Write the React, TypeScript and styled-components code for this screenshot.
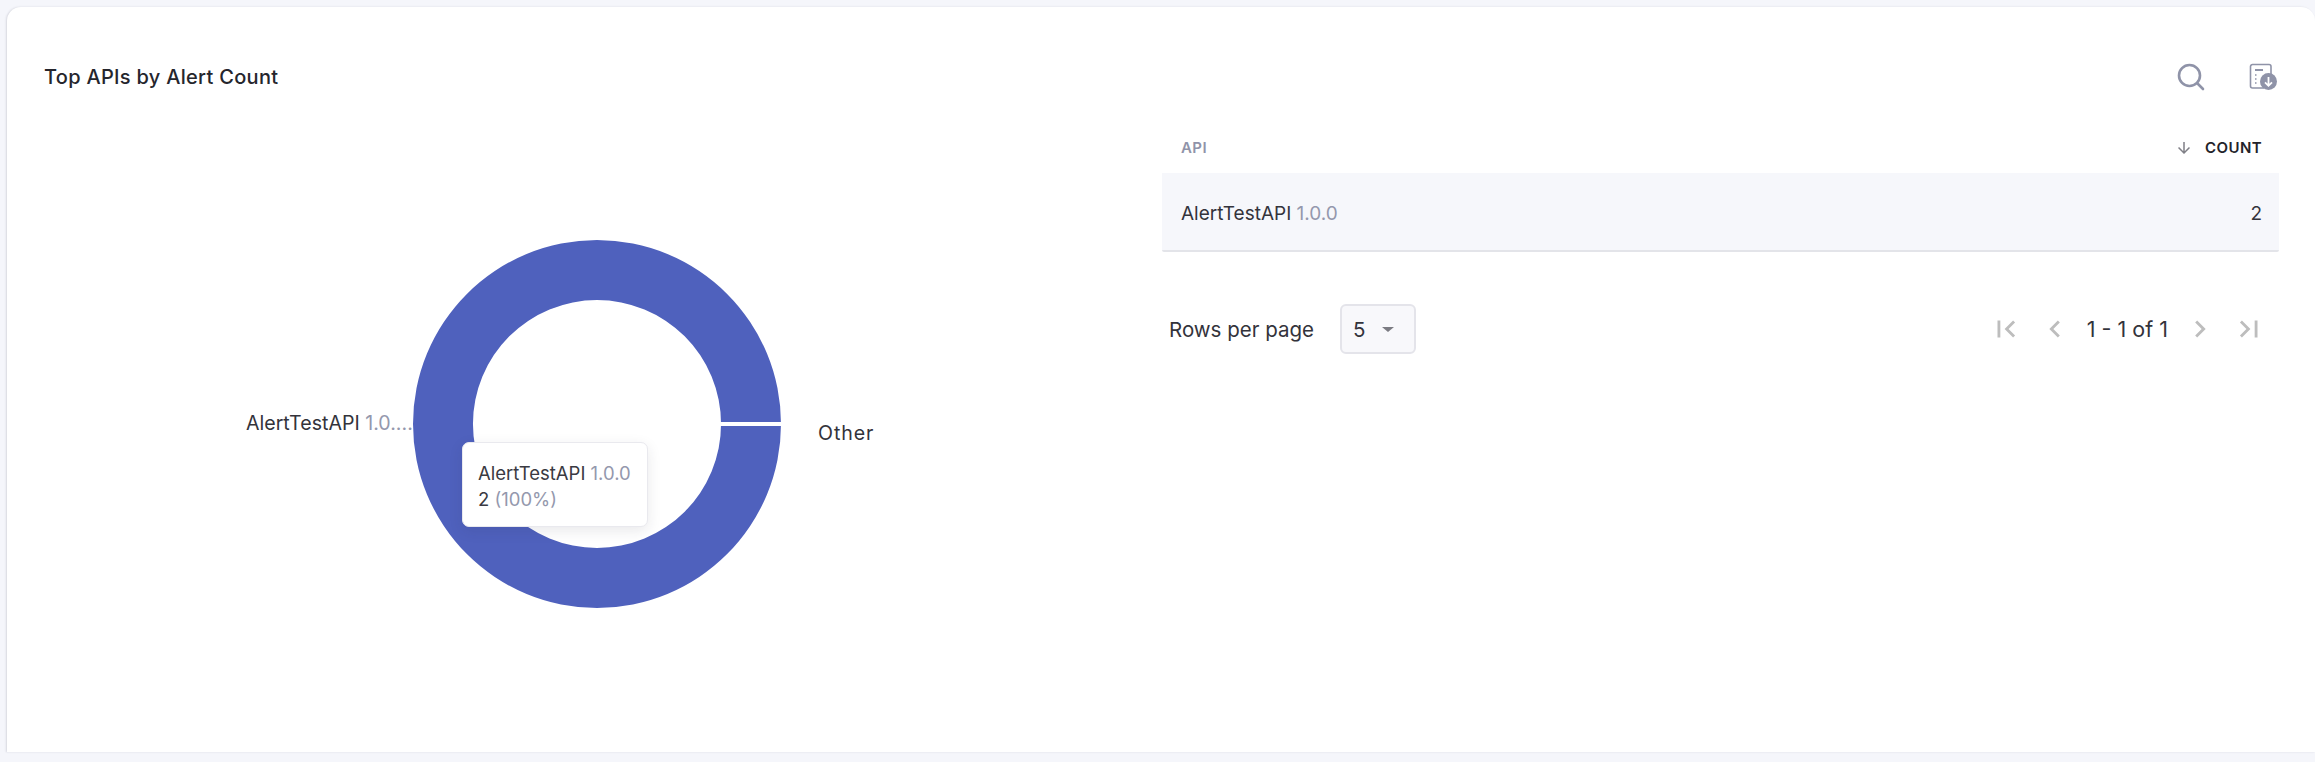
import React from "react";
import styled, { createGlobalStyle } from "styled-components";

const Global = createGlobalStyle`
  html, body { margin: 0; padding: 0; background: #f5f6fb; }
  body { font-family: "Inter", "Liberation Sans", sans-serif; color: #26262e; }
`;
const Page = styled.div`
  box-sizing: border-box;
  width: 2315px;
  height: 762px;
  padding: 7px 0 10px 7px;
  overflow: hidden;
`;
const Card = styled.section`
  height: 100%;
  display: flex;
  flex-direction: column;
  background: #fff;
  border-radius: 14px 14px 0 0;
  box-shadow: -1px 0 2px rgba(60, 60, 80, 0.16);
`;
const Header = styled.header`
  height: 113px;
  flex: none;
  box-sizing: border-box;
  display: flex;
  align-items: center;
  justify-content: space-between;
  padding: 27px 38px 0 37px;
`;
const Title = styled.h2`
  margin: 0;
  font-size: 20px;
  font-weight: 500;
  letter-spacing: 0.3px;
  color: #25252c;
`;
const Tools = styled.div`
  display: flex;
  align-items: center;
  gap: 43px;
`;
const Body = styled.div`
  flex: 1;
  display: grid;
  grid-template-columns: 1155px 1fr;
  min-height: 0;
`;
const ChartPane = styled.div`
  position: relative;
`;
const ChartSvg = styled.svg`
  display: block;
`;
const ChartLabel = styled.text`
  font-family: "Inter", "Liberation Sans", sans-serif;
  font-size: 19.6px;
  fill: #33333b;
`;
const Muted = styled.tspan`
  fill: #9498ad;
`;
const Tooltip = styled.div`
  position: absolute;
  left: 455px;
  top: 322px;
  box-sizing: border-box;
  width: 186px;
  height: 85px;
  padding: 17px 15px;
  background: #fff;
  border: 1px solid #e9e9ee;
  border-radius: 7px;
  box-shadow: 0 4px 14px rgba(40, 40, 60, 0.1);
  font-size: 18.5px;
  line-height: 26px;
  color: #3a3a42;
  white-space: nowrap;
`;
const Soft = styled.span`
  color: #9498ad;
`;
const TablePane = styled.div`
  padding-right: 36px;
`;
const HeadRow = styled.div`
  height: 53px;
  display: flex;
  align-items: center;
  justify-content: space-between;
  padding: 2px 17px 0 19px;
  box-sizing: border-box;
  font-size: 15px;
  font-weight: 600;
  letter-spacing: 0.4px;
`;
const HeadLabel = styled.span<{ $active?: boolean }>`
  color: ${(p) => (p.$active ? "#23232a" : "#8f93a9")};
`;
const SortCell = styled.div`
  display: flex;
  align-items: center;
  gap: 12px;
`;
const DataRow = styled.div`
  height: 79px;
  box-sizing: border-box;
  display: flex;
  align-items: center;
  justify-content: space-between;
  padding: 4px 17px 0 19px;
  background: #f6f7fb;
  border-bottom: 2px solid #e3e4e9;
  border-radius: 0 0 2px 2px;
  font-size: 19px;
  color: #33333b;
`;
const Pager = styled.div`
  margin-top: 52px;
  display: flex;
  align-items: center;
  justify-content: space-between;
  padding: 0 13px 0 7px;
  height: 50px;
`;
const PagerLeft = styled.div`
  display: flex;
  align-items: center;
  gap: 26px;
  font-size: 20.5px;
  color: #33333b;
`;
const SelectBox = styled.div`
  box-sizing: border-box;
  width: 76px;
  height: 50px;
  display: flex;
  align-items: center;
  gap: 17px;
  padding-left: 11px;
  background: #f8f8fb;
  border: 2px solid #e4e4ea;
  border-radius: 6px;
`;
const Caret = styled.span`
  width: 0;
  height: 0;
  border-left: 6px solid transparent;
  border-right: 6px solid transparent;
  border-top: 5px solid #7b7b82;
`;
const PagerRight = styled.div`
  display: flex;
  align-items: center;
  gap: 15px;
`;
const PageIcon = styled.svg`
  display: block;
  fill: #bdbdbd;
`;
const RangeText = styled.span`
  font-size: 21.5px;
  color: #33333b;
`;

const Page32 = ({ d }: { d: string }) => (
  <PageIcon width="34" height="34" viewBox="0 0 24 24"><path d={d} /></PageIcon>
);

export default function App() {
  return (
    <Page>
      <Global />
      <Card>
        <Header>
          <Title>Top APIs by Alert Count</Title>
          <Tools>
            <svg width="30" height="30" viewBox="0 0 30 30" fill="none" stroke="#8f93a8" strokeWidth="2.6" strokeLinecap="round">
              <circle cx="13.5" cy="13.5" r="10.5" />
              <path d="M21.5 21.5 L27 27" />
            </svg>
            <svg width="28" height="28" viewBox="0 0 28 28" fill="none">
              <path d="M15 25H3.5A2 2 0 0 1 1.5 23V3.5A2 2 0 0 1 3.5 1.5H20A2 2 0 0 1 22 3.5V11" stroke="#8f93a8" strokeWidth="1.6" />
              <path d="M6 7H14" stroke="#8f93a8" strokeWidth="2" />
              <path d="M6 12H7.5M6 16H7.5M6 20H7.5" stroke="#8f93a8" strokeWidth="1.6" />
              <circle cx="19.5" cy="18.5" r="8.5" fill="#8f93a8" />
              <path d="M19.5 14V22.5M16 19.3L19.5 22.8L23 19.3" stroke="#fff" strokeWidth="1.8" />
            </svg>
          </Tools>
        </Header>
        <Body>
          <ChartPane>
            <ChartSvg width="1155" height="600" viewBox="0 0 1155 600">
              <path
                fillRule="evenodd"
                fill="#4f61bd"
                d="M590 120a184 184 0 1 0 0 368a184 184 0 1 0 0-368zM590 180a124 124 0 1 1 0 248a124 124 0 1 1 0-248z"
              />
              <rect x="713" y="302" width="62" height="4" fill="#fff" />
              <ChartLabel x="239" y="310">AlertTestAPI <Muted>1.0....</Muted></ChartLabel>
              <ChartLabel x="811" y="320" letterSpacing="0.9">Other</ChartLabel>
            </ChartSvg>
            <Tooltip>
              AlertTestAPI <Soft>1.0.0</Soft>
              <br />
              2 <Soft>(100%)</Soft>
            </Tooltip>
          </ChartPane>
          <TablePane>
            <HeadRow>
              <HeadLabel>API</HeadLabel>
              <SortCell>
                <svg width="18" height="18" viewBox="0 0 24 24" fill="#7f7f86"><path d="M20 12l-1.41-1.41L13 16.17V4h-2v12.17l-5.58-5.59L4 12l8 8 8-8z" /></svg>
                <HeadLabel $active>COUNT</HeadLabel>
              </SortCell>
            </HeadRow>
            <DataRow>
              <span>AlertTestAPI <Soft>1.0.0</Soft></span>
              <span>2</span>
            </DataRow>
            <Pager>
              <PagerLeft>
                <span>Rows per page</span>
                <SelectBox>5<Caret /></SelectBox>
              </PagerLeft>
              <PagerRight>
                <Page32 d="M18.41 16.59L13.82 12l4.59-4.59L17 6l-6 6 6 6zM6 6h2v12H6z" />
                <Page32 d="M15.41 7.41L14 6l-6 6 6 6 1.41-1.41L10.83 12z" />
                <RangeText>1 - 1 of 1</RangeText>
                <Page32 d="M10 6L8.59 7.41 13.17 12l-4.58 4.59L10 18l6-6z" />
                <Page32 d="M5.59 7.41L10.18 12l-4.59 4.59L7 18l6-6-6-6zM16 6h2v12h-2z" />
              </PagerRight>
            </Pager>
          </TablePane>
        </Body>
      </Card>
    </Page>
  );
}
